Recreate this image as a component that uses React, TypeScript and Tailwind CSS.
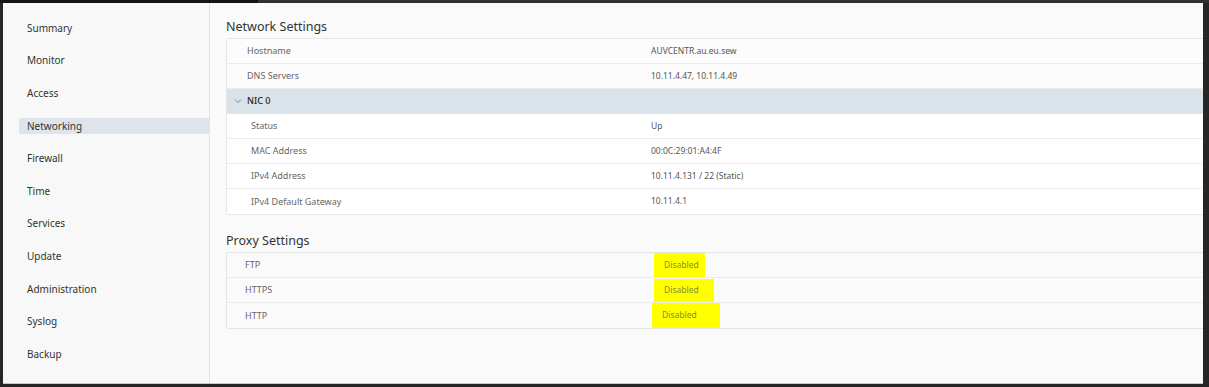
import React from "react";

const navItems = [
    "Summary",
    "Monitor",
    "Access",
    "Networking",
    "Firewall",
    "Time",
    "Services",
    "Update",
    "Administration",
    "Syslog",
    "Backup",
];

const networkRows = [
    { label: "Hostname", value: "AUVCENTR.au.eu.sew" },
    { label: "DNS Servers", value: "10.11.4.47, 10.11.4.49" },
];

const nicRows = [
    { label: "Status", value: "Up" },
    { label: "MAC Address", value: "00:0C:29:01:A4:4F" },
    { label: "IPv4 Address", value: "10.11.4.131 / 22 (Static)" },
    { label: "IPv4 Default Gateway", value: "10.11.4.1" },
];

const proxyRows = [
    { label: "FTP", box: "w-[51px] h-[24px] ml-[3px]" },
    { label: "HTTPS", box: "w-[60px] h-[23px] ml-[3px]" },
    { label: "HTTP", box: "w-[68px] h-[25px] ml-[1px]" },
];

export default function App() {
    return (
        <div
            className="w-[1209px] h-[387px] bg-[#262626] flex flex-col overflow-hidden"
            style={{ fontFamily: "'Noto Sans', 'Open Sans', sans-serif" }}>
            <div className="flex h-[3px] shrink-0">
                <div className="w-[258px] bg-[#141414]"></div>
                <div className="flex-1 bg-[#303030]"></div>
            </div>
            <div className="flex flex-1 pl-[3px] pr-[6px] pb-[3px]">
                <div className="flex flex-1 border-b border-[#c8c8c8] bg-[#fafafa]">
                    {/* sidebar */}
                    <nav className="w-[207px] shrink-0 border-r border-[#e4e4e4] bg-[#f8f8f8] pt-[9px] pl-[16px]">
                        {navItems.map((item) => (
                            <div
                                key={item}
                                className={
                                    "h-[32.6px] flex items-center pl-[8px] text-[10px] text-[#333] " +
                                    (item === "Networking" ? "bg-[#dde4eb] rounded-l-[2px] !h-[16px] my-[8.3px]" : "")
                                }>
                                {item}
                            </div>
                        ))}
                    </nav>

                    {/* content */}
                    <main className="flex-1 pl-[16px] pt-[15px]">
                        <h2 className="text-[12.5px] leading-[18px] text-[#333] mb-[2px]">Network Settings</h2>
                        <div className="border border-r-0 border-[#e6e6e6] rounded-l-[3px] text-[8.5px] text-[#666]">
                            {networkRows.map((row) => (
                                <div key={row.label} className="flex h-[25px] items-center border-b border-[#ececec] bg-[#fcfcfc]">
                                    <div className="w-[424px] pl-[20px] text-[9px]">{row.label}</div>
                                    <div className="text-[#555]">{row.value}</div>
                                </div>
                            ))}
                            <div className="flex h-[25px] items-center bg-[#dbe3ea] border-b border-[#e0e6ec]">
                                <svg width="8" height="8" viewBox="0 0 8 8" className="ml-[7px] mr-[5px]">
                                    <path d="M1 2.5 L4 5.5 L7 2.5" fill="none" stroke="#777" strokeWidth="0.9" />
                                </svg>
                                <span className="text-[#222] text-[9px] font-medium">NIC 0</span>
                            </div>
                            {nicRows.map((row, i) => (
                                <div
                                    key={row.label}
                                    className={
                                        "flex h-[25px] items-center bg-white " +
                                        (i < nicRows.length - 1 ? "border-b border-[#ececec]" : "")
                                    }>
                                    <div className="w-[424px] pl-[24px] text-[9px]">{row.label}</div>
                                    <div className="text-[#555]">{row.value}</div>
                                </div>
                            ))}
                        </div>

                        <h2 className="text-[12.5px] leading-[18px] text-[#333] mt-[17px] mb-[2px]">Proxy Settings</h2>
                        <div className="border border-r-0 border-[#e3e3e3] rounded-l-[3px] text-[8.5px] text-[#666]">
                            {proxyRows.map((row, i) => (
                                <div
                                    key={row.label}
                                    className={
                                        "flex h-[25px] items-center bg-[#fafafa] " +
                                        (i < proxyRows.length - 1 ? "border-b border-[#ebebeb]" : "")
                                    }>
                                    <div className="w-[424px] pl-[18px] text-[9px]">{row.label}</div>
                                    <div className={"bg-[#ffff00] flex items-center pl-[10px] text-[#8a8a3a] " + row.box}>
                                        Disabled
                                    </div>
                                </div>
                            ))}
                        </div>
                    </main>
                </div>
            </div>
        </div>
    );
}
